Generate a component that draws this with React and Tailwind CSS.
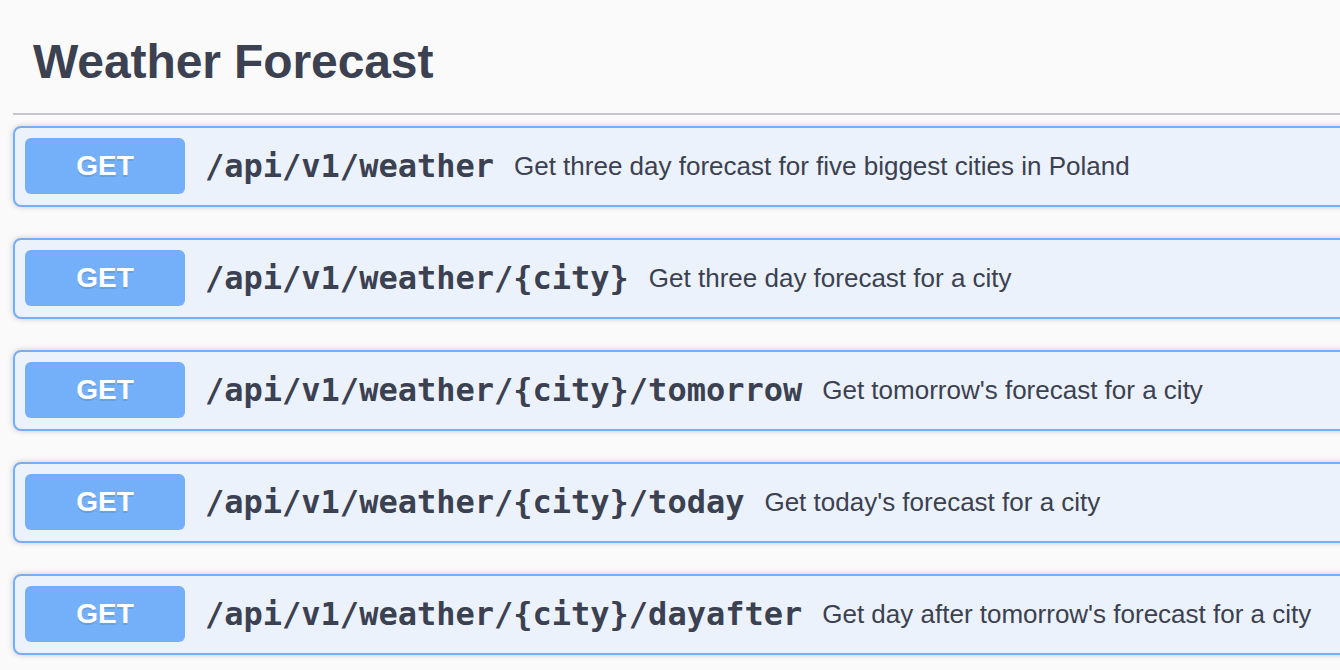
import React from 'react';

const endpoints = [
  { path: '/api/v1/weather', summary: 'Get three day forecast for five biggest cities in Poland' },
  { path: '/api/v1/weather/{city}', summary: 'Get three day forecast for a city' },
  { path: '/api/v1/weather/{city}/tomorrow', summary: "Get tomorrow's forecast for a city" },
  { path: '/api/v1/weather/{city}/today', summary: "Get today's forecast for a city" },
  { path: '/api/v1/weather/{city}/dayafter', summary: "Get day after tomorrow's forecast for a city" },
];

export default function App() {
  return (
    <div className="w-[1340px] h-[670px] overflow-hidden bg-[#fafafa] text-[#3b4151] font-['Liberation_Sans',Arial,sans-serif]">
      <div className="w-[1420px] pl-[13px]">
        {/* Tag heading */}
        <div className="border-b-2 border-[#c6c7cc] pl-[20px] pt-[34px] pb-[24px] mb-[11px]">
          <h4 className="text-[48px] leading-[55px] font-bold tracking-[-0.1px]">Weather Forecast</h4>
        </div>

        {/* Operations */}
        {endpoints.map((op) => (
          <div
            key={op.path}
            className="mb-[31px] flex items-center rounded-[8px] border-2 border-[#75aefa] bg-[#ebf2fb] pl-[10px] pt-[10px] pb-[11px] shadow-[0_0_6px_rgba(0,0,0,0.19)]"
          >
            <span className="flex h-[56px] w-[160px] shrink-0 items-center justify-center rounded-[6px] bg-[#74aff9] text-[28px] font-bold text-white [text-shadow:0_2px_0_rgba(0,0,0,0.1)]">
              GET
            </span>
            <span className="pl-[20px] pr-[20px] font-['DejaVu_Sans_Mono',monospace] text-[32px] font-bold leading-none">
              {op.path}
            </span>
            <span className="text-[26px] leading-none">{op.summary}</span>
          </div>
        ))}
      </div>
    </div>
  );
}
